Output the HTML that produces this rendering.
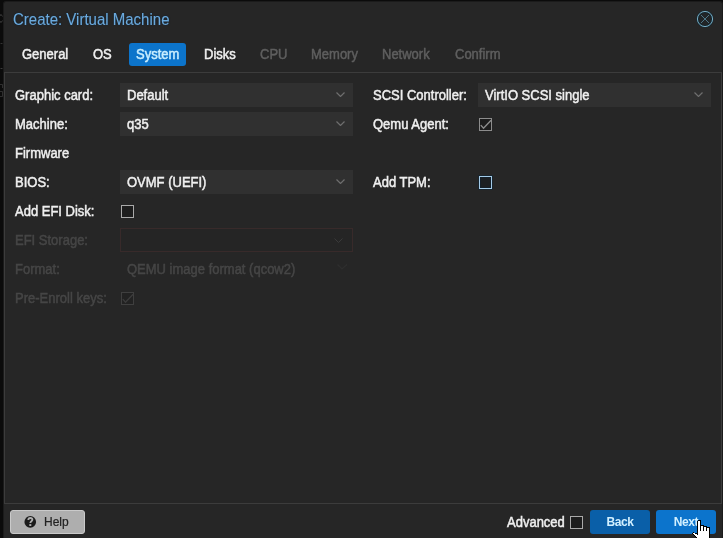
<!DOCTYPE html>
<html><head><meta charset="utf-8">
<style>
html,body{margin:0;padding:0;width:723px;height:538px;overflow:hidden;background:#0b0b0b;}
body{position:relative;font-family:"Liberation Sans",sans-serif;font-size:13px;color:#f0f0f0;}
.a{position:absolute;white-space:pre;line-height:15px;will-change:transform;-webkit-text-stroke:0.45px currentColor;transform:scaleY(1.08);transform-origin:0 12px;}
#dlg{position:absolute;left:3px;top:1px;width:720px;height:540px;background:#262626;border:1px solid #1b1b1b;border-bottom:0;box-sizing:border-box;border-radius:3px 3px 0 0;}
#title{left:13px;top:10px;font-size:15px;line-height:18px;transform-origin:0 2.5px;transform:scaleY(1.06);-webkit-text-stroke:0.1px currentColor;color:#6caadd;text-shadow:0 0 1.5px #06223a;}
.tab{top:43px;height:23px;line-height:23px;transform:scaleY(1.08);transform-origin:0 16px;background:none!important;padding:0 7px;border-radius:3px;color:#f0f0f0;}
.tab.act{background:#0c74cb;color:#c9eeff;}
.tab.dis{color:#5f5f5f;}
#panel{position:absolute;left:4px;top:72px;width:718px;height:432px;border:1px solid #3c3c3c;box-sizing:border-box;}
.lbl{color:#efefef;}
.dlbl{color:#464646;}
.combo{position:absolute;height:24px;width:233px;background:#303030;box-sizing:border-box;}
.combo .t{position:absolute;left:7px;top:5px;line-height:15px;will-change:transform;-webkit-text-stroke:0.45px currentColor;transform:scaleY(1.08);transform-origin:0 12px;}
.chev{position:absolute;right:8px;top:9px;}
.cb{position:absolute;width:13px;height:13px;}
.btn{position:absolute;top:510px;height:24px;border-radius:3px;box-sizing:border-box;text-align:center;line-height:22px;font-size:12px;will-change:transform;}
</style></head>
<body>
<div id="dlg"></div>
<svg style="position:absolute;left:0;top:40px" width="3" height="60" viewBox="0 0 3 60"><rect x="0.5" y="3" width="2" height="1" fill="#333"/><rect x="0.5" y="28" width="2" height="1" fill="#3a3a3a"/><path d="M0 44.5H2.5V48M0 51.5H2.5V56.5H0" fill="none" stroke="#333" stroke-width="0.9"/></svg>
<svg style="position:absolute;left:0;top:13px" width="4" height="12" viewBox="0 0 4 12"><path d="M-0.5 2.2Q1.5 1.2 2.6 3.2M-0.5 8.8Q1.5 9.8 2.6 7.8" fill="none" stroke="#4a4a4a" stroke-width="1"/></svg>
<div class="a" id="title">Create: Virtual Machine</div>
<svg style="position:absolute;left:695px;top:9px" width="20" height="20" viewBox="0 0 20 20">
  <circle cx="10" cy="10" r="7.5" fill="#212426" stroke="#132a36" stroke-width="2.2"/>
  <circle cx="10" cy="10" r="7.6" fill="none" stroke="#78aabf" stroke-width="1"/>
  <path d="M6 6L14 14M14 6L6 14" stroke="#55849a" stroke-width="0.85"/>
</svg>

<div class="a tab" style="left:15px">General</div>
<div class="a tab" style="left:86px">OS</div>
<div style="position:absolute;left:129px;top:43px;width:57px;height:23px;border-radius:3px;background:#0c74cb"></div>
<div class="a tab act" style="left:129px">System</div>
<div class="a tab" style="left:197px">Disks</div>
<div class="a tab dis" style="left:253px">CPU</div>
<div class="a tab dis" style="left:304px">Memory</div>
<div class="a tab dis" style="left:375px">Network</div>
<div class="a tab dis" style="left:448px">Confirm</div>

<div id="panel"></div>

<!-- left column -->
<div class="a lbl" style="left:15px;top:88px">Graphic card:</div>
<div class="combo" style="left:120px;top:83px"><span class="t">Default</span>
 <svg class="chev" width="9" height="5" viewBox="0 0 9 5"><path d="M0.5 0.5L4.5 4.5L8.5 0.5" fill="none" stroke="#6e6e6e" stroke-width="1.2"/></svg></div>
<div class="a lbl" style="left:15px;top:117px">Machine:</div>
<div class="combo" style="left:120px;top:112px"><span class="t">q35</span>
 <svg class="chev" width="9" height="5" viewBox="0 0 9 5"><path d="M0.5 0.5L4.5 4.5L8.5 0.5" fill="none" stroke="#6e6e6e" stroke-width="1.2"/></svg></div>
<div class="a lbl" style="left:15px;top:146px">Firmware</div>
<div class="a lbl" style="left:15px;top:175px">BIOS:</div>
<div class="combo" style="left:120px;top:170px"><span class="t">OVMF (UEFI)</span>
 <svg class="chev" width="9" height="5" viewBox="0 0 9 5"><path d="M0.5 0.5L4.5 4.5L8.5 0.5" fill="none" stroke="#6e6e6e" stroke-width="1.2"/></svg></div>
<div class="a lbl" style="left:15px;top:204px">Add EFI Disk:</div>
<svg class="cb" style="left:121px;top:205px" viewBox="0 0 13 13"><rect x="0.5" y="0.5" width="12" height="12" fill="#1d1d1d" stroke="#a9a9a9" stroke-width="1"/></svg>
<div class="a dlbl" style="left:15px;top:233px">EFI Storage:</div>
<div class="combo" style="left:120px;top:228px;background:#252525;border:1px solid #382a2a"><svg class="chev" style="right:9px;top:9px" width="9" height="5" viewBox="0 0 9 5"><path d="M0.5 0.5L4.5 4.5L8.5 0.5" fill="none" stroke="#3a3a3a" stroke-width="1"/></svg></div>
<div class="a dlbl" style="left:15px;top:262px">Format:</div>
<div class="a dlbl" style="left:127px;top:262px">QEMU image format (qcow2)</div>
<svg style="position:absolute;left:337px;top:264px" width="11" height="6" viewBox="0 0 11 6"><path d="M0.5 0.5L5 5L10 0.5" fill="none" stroke="#2e2e2e" stroke-width="1.2"/></svg>
<div class="a dlbl" style="left:15px;top:291px">Pre-Enroll keys:</div>
<svg class="cb" style="left:121px;top:292px" viewBox="0 0 13 13"><rect x="0.5" y="0.5" width="12" height="12" fill="#222" stroke="#3f3f3f" stroke-width="1"/><path d="M1.8 7.1L4.5 10.2L12.1 2.2" fill="none" stroke="#3c3c3c" stroke-width="1.3"/></svg>

<!-- right column -->
<div class="a lbl" style="left:373px;top:88px">SCSI Controller:</div>
<div class="combo" style="left:478px;top:83px"><span class="t">VirtIO SCSI single</span>
 <svg class="chev" width="9" height="5" viewBox="0 0 9 5"><path d="M0.5 0.5L4.5 4.5L8.5 0.5" fill="none" stroke="#6e6e6e" stroke-width="1.2"/></svg></div>
<div class="a lbl" style="left:373px;top:117px">Qemu Agent:</div>
<svg class="cb" style="left:479px;top:118px" viewBox="0 0 13 13"><rect x="0.5" y="0.5" width="12" height="12" fill="#1d1d1d" stroke="#8c8c8c" stroke-width="1"/><path d="M1.8 7.1L4.5 10.2L12.1 2.2" fill="none" stroke="#8c8c8c" stroke-width="1.4"/></svg>
<div class="a lbl" style="left:373px;top:175px">Add TPM:</div>
<svg style="position:absolute;left:478px;top:175px" width="15" height="15" viewBox="0 0 15 15"><rect x="0.5" y="0.5" width="14" height="14" fill="none" stroke="#19252e" stroke-width="1"/><rect x="1.5" y="1.5" width="12" height="12" fill="#1c1f22" stroke="#a4cbe8" stroke-width="1"/><rect x="2.5" y="2.5" width="10" height="10" fill="none" stroke="#15202a" stroke-width="1"/></svg>

<!-- bottom toolbar -->
<div class="btn" style="left:10px;width:75px;background:#aeaeae;border:1px solid #cacaca;color:#222;-webkit-text-stroke:0.2px #222;">
 <svg style="position:absolute;left:11px;top:3px" width="18" height="16" viewBox="0 0 18 16"><circle cx="8.25" cy="7.9" r="5.8" fill="#1b1b1b"/><path d="M6.3,6.1 C6.3,4.7 7.2,4 8.3,4 C9.6,4 10.4,4.8 10.4,5.8 C10.4,7.2 8.4,7.4 8.3,9" fill="none" stroke="#aeaeae" stroke-width="1.8"/><rect x="7.3" y="10.1" width="2" height="1.9" fill="#aeaeae"/></svg>
 <span style="position:absolute;left:33px;top:0">Help</span></div>
<div class="a lbl" style="left:507px;top:515px">Advanced</div>
<svg class="cb" style="left:570px;top:516px" viewBox="0 0 13 13"><rect x="0.5" y="0.5" width="12" height="12" fill="#1d1d1d" stroke="#a9a9a9" stroke-width="1"/></svg>
<div class="btn" style="left:590px;width:60px;background:#0a5fa8;color:#d2f0ff;font-weight:700;line-height:24px;letter-spacing:-0.4px">Back</div>
<div class="btn" style="left:656px;width:60px;background:#0c74cc;color:#d2f0ff;font-weight:700;line-height:24px;letter-spacing:-0.4px">Next</div>

<!-- cursor -->
<svg style="position:absolute;left:688px;top:516px" width="26" height="22" viewBox="688 516 26 22" shape-rendering="crispEdges">
 <path d="M697,521 L698,520 H700 L701,521 V525 H703 L704,525 V526 H706 L707,527 H709 L710,528 V538 H696.4 L692.2,533.3 L693.2,532.1 L697,533.6 Z" fill="#000"/>
 <path d="M698,521 H700 V531 H701 V526 H703 V531 H704 V527 H706 V531 H707 V528 H709 V538 H697.4 L692.9,533.5 L693.6,532.9 L698,534.9 Z" fill="#fff"/>
</svg>
</body></html>
